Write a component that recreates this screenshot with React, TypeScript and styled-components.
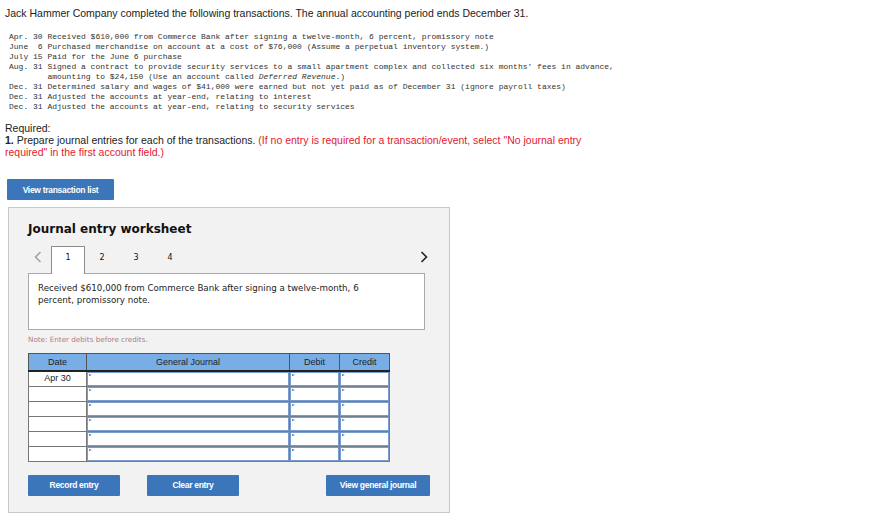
import React from "react";
import styled, { createGlobalStyle } from "styled-components";

const GlobalStyle = createGlobalStyle`
  html, body { margin: 0; padding: 0; background: #fff; }
  body { font-family: "Liberation Sans", Arial, sans-serif; color: #222; }
`;

const transactions = [
  "Apr. 30 Received $610,000 from Commerce Bank after signing a twelve-month, 6 percent, promissory note",
  "June  6 Purchased merchandise on account at a cost of $76,000 (Assume a perpetual inventory system.)",
  "July 15 Paid for the June 6 purchase",
];

const rows = ["Apr 30", "", "", "", "", ""];

const App = () => {
  return (
    <Page>
      <GlobalStyle />
      <Intro>
        Jack Hammer Company completed the following transactions. The annual
        accounting period ends December 31.
      </Intro>
      <Mono>
        {transactions.map((t) => (
          <div key={t}>{t}</div>
        ))}
        <div>
          Aug. 31 Signed a contract to provide security services to a small
          apartment complex and collected six months’ fees in advance,
        </div>
        <div>
          {"        "}amounting to $24,150 (Use an account called{" "}
          <i>Deferred Revenue</i>.)
        </div>
        <div>
          Dec. 31 Determined salary and wages of $41,000 were earned but not yet
          paid as of December 31 (ignore payroll taxes)
        </div>
        <div>Dec. 31 Adjusted the accounts at year-end, relating to interest</div>
        <div>
          Dec. 31 Adjusted the accounts at year-end, relating to security
          services
        </div>
      </Mono>

      <Required>
        <div>Required:</div>
        <div>
          <b>1.</b> Prepare journal entries for each of the transactions.{" "}
          <Red>
            (If no entry is required for a transaction/event, select "No
            journal entry
          </Red>
          <br />
          <Red>required" in the first account field.)</Red>
        </div>
      </Required>

      <TopButton $w={107}>View transaction list</TopButton>

      <Panel>
        <PanelTitle>Journal entry worksheet</PanelTitle>
        <TabRow>
          <Arrow $dim>
            <svg width="8" height="12" viewBox="0 0 8 12">
              <path d="M6.5 1 L1.5 6 L6.5 11" fill="none" stroke="#9aa4b4" strokeWidth="1.6" />
            </svg>
          </Arrow>
          <Tab $active>1</Tab>
          <Tab>2</Tab>
          <Tab>3</Tab>
          <Tab>4</Tab>
          <Spacer />
          <Arrow>
            <svg width="8" height="12" viewBox="0 0 8 12">
              <path d="M1.5 1 L6.5 6 L1.5 11" fill="none" stroke="#1c2333" strokeWidth="1.6" />
            </svg>
          </Arrow>
        </TabRow>
        <Description>
          Received $610,000 from Commerce Bank after signing a twelve-month, 6
          <br />
          percent, promissory note.
        </Description>
        <Note>Note: Enter debits before credits.</Note>

        <Table>
          <thead>
            <tr>
              <Th $w={58}>Date</Th>
              <Th $w={203}>General Journal</Th>
              <Th $w={50}>Debit</Th>
              <Th $w={50}>Credit</Th>
            </tr>
          </thead>
          <tbody>
            {rows.map((d, i) => (
              <tr key={i}>
                <DateCell>{d}</DateCell>
                <InputCell />
                <InputCell />
                <InputCell />
              </tr>
            ))}
          </tbody>
        </Table>

        <ButtonRow>
          <BlueButton $w={92}>Record entry</BlueButton>
          <BlueButton $w={92}>Clear entry</BlueButton>
          <Spacer />
          <BlueButton $w={104}>View general journal</BlueButton>
        </ButtonRow>
      </Panel>
    </Page>
  );
};

const Page = styled.div`
  padding: 6px 0 0 5px;
  width: 860px;
`;

const Intro = styled.div`
  font-size: 10.5px;
  line-height: 14px;
  color: #222;
`;

const Mono = styled.div`
  margin: 12px 0 0 4px;
  font-family: "Liberation Mono", "DejaVu Sans Mono", monospace;
  font-size: 8px;
  line-height: 10px;
  white-space: pre;
  color: #333;
`;

const Required = styled.div`
  margin-top: 10px;
  font-size: 10.5px;
  line-height: 12px;
  width: 620px;
  color: #222;
`;

const Red = styled.span`
  color: #e4182e;
`;

const BlueButton = styled.div<{ $w: number }>`
  width: ${(p) => p.$w}px;
  height: 21px;
  display: flex;
  align-items: center;
  justify-content: center;
  background: #3b76bb;
  color: #fff;
  font-weight: bold;
  font-size: 8.5px;
  letter-spacing: -0.3px;
  border-radius: 1px;
  flex-shrink: 0;
`;

const TopButton = styled(BlueButton)`
  margin: 21px 0 0 2px;
`;

const Panel = styled.div`
  margin: 7px 0 0 3px;
  width: 442px;
  height: 306px;
  box-sizing: border-box;
  background: #f2f2f2;
  border: 1px solid #c8c8c8;
  padding: 12px 26px 0 19px;
`;

const PanelTitle = styled.div`
  font-family: "DejaVu Sans", Verdana, sans-serif;
  font-weight: bold;
  font-size: 12px;
  color: #111;
  height: 26px;
  line-height: 18px;
`;

const TabRow = styled.div`
  display: flex;
  align-items: stretch;
  height: 27px;
  margin-right: -12px;
`;

const Arrow = styled.div<{ $dim?: boolean }>`
  width: 23px;
  display: flex;
  align-items: center;
  justify-content: ${(p) => (p.$dim ? "flex-start" : "center")};
  padding: 0 0 6px ${(p) => (p.$dim ? "6px" : "0")};
  box-sizing: border-box;
`;

const Tab = styled.div<{ $active?: boolean }>`
  width: 34px;
  display: flex;
  align-items: center;
  justify-content: center;
  padding-bottom: 6px;
  box-sizing: border-box;
  font-family: "DejaVu Sans", Verdana, sans-serif;
  font-size: 8px;
  color: #111;
  background: ${(p) => (p.$active ? "#fff" : "transparent")};
  border: 1px solid ${(p) => (p.$active ? "#8c8c8c" : "transparent")};
  border-bottom: none;
  margin-bottom: -1px;
  position: relative;
  z-index: 1;
`;

const Spacer = styled.div`
  flex: 1;
`;

const Description = styled.div`
  height: 57px;
  margin-right: -2px;
  box-sizing: border-box;
  background: #fff;
  border: 1px solid #aaa;
  padding: 8px 9px;
  font-family: "DejaVu Sans", Verdana, sans-serif;
  font-size: 8.7px;
  line-height: 12px;
  color: #222;
`;

const Note = styled.div`
  margin-top: 5px;
  height: 18px;
  font-family: "DejaVu Sans", Verdana, sans-serif;
  font-size: 7.2px;
  color: #b07a80;
`;

const Table = styled.table`
  border-collapse: collapse;
  table-layout: fixed;
  width: 362px;
  font-family: "Liberation Sans", Arial, sans-serif;
  font-size: 9px;
`;

const Th = styled.th<{ $w: number }>`
  width: ${(p) => p.$w}px;
  height: 17px;
  padding: 0;
  box-sizing: border-box;
  background: #78ade6;
  border: 1px solid #555;
  border-bottom: 2px solid #222;
  font-weight: normal;
  color: #222;
`;

const DateCell = styled.td`
  height: 14px;
  padding: 0;
  background: #fff;
  border: 1px solid #777;
  text-align: center;
  vertical-align: top;
  line-height: 12px;
  color: #222;
`;

const InputCell = styled.td`
  height: 14px;
  padding: 0;
  background: #fff;
  border: 1px solid #6e7f96;
  box-shadow: inset 0 0 0 1px #7a9ccc;
  position: relative;

  &::before {
    content: "";
    position: absolute;
    left: 2px;
    top: 2px;
    border-left: 3px solid #3b78c8;
    border-top: 1.5px solid transparent;
    border-bottom: 1.5px solid transparent;
  }
`;

const ButtonRow = styled.div`
  display: flex;
  gap: 27px;
  margin-top: 13px;
  margin-right: -7px;
`;

export default App;
